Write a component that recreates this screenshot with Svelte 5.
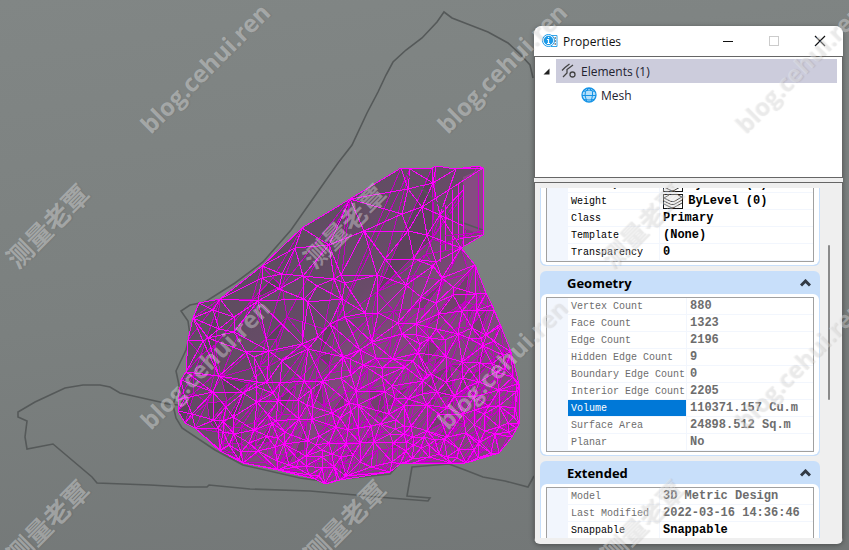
<script>
  const outline = [
    [401, 168], [410, 169], [432, 168], [436, 166], [456, 169], [478, 166], [483, 168], [483, 235],
    [461, 248], [475, 265], [486, 293], [492, 305], [500, 324], [511, 352], [519, 384], [519, 424],
    [512, 437], [499, 453], [466, 463], [400, 464], [390, 472], [340, 480], [325, 484], [315, 479],
    [278, 470], [243, 463], [220, 451], [195, 428], [185, 423], [178, 411], [178, 400], [181, 380],
    [186, 372], [188, 340], [193, 318], [199, 303], [220, 299], [262, 266], [302, 228], [350, 199]
  ];

  const hubs = [
    [295, 248], [262, 278], [258, 301], [213, 310], [234, 317], [279, 289], [303, 276], [304, 299],
    [342, 299], [329, 245], [334, 279], [408, 189], [364, 231], [408, 231], [422, 207], [433, 183],
    [427, 235], [436, 262], [385, 259], [406, 285], [378, 313], [421, 297], [453, 287], [462, 311],
    [439, 314], [345, 283], [402, 214], [440, 215], [208, 338], [246, 352], [269, 351], [302, 344],
    [282, 361], [343, 357], [257, 382], [280, 383], [213, 392], [243, 393], [257, 402], [218, 428],
    [276, 421], [254, 430], [285, 432], [307, 405], [322, 457], [436, 329], [350, 359], [382, 377],
    [427, 374], [385, 392], [427, 405], [486, 335], [478, 444], [444, 439], [454, 396]
  ];

  function seeded(seed) {
    let s = seed;
    return () => {
      s = (s * 16807) % 2147483647;
      return s / 2147483647;
    };
  }

  function inside(x, y) {
    let hit = false;
    for (let i = 0, j = outline.length - 1; i < outline.length; j = i++) {
      const [xi, yi] = outline[i];
      const [xj, yj] = outline[j];
      if (yi > y !== yj > y && x < ((xj - xi) * (y - yi)) / (yj - yi) + xi) hit = !hit;
    }
    return hit;
  }

  function scatter(count, seed, spacing) {
    const rnd = seeded(seed);
    const pts = [];
    for (let tries = 0; pts.length < count && tries < 20000; tries++) {
      const x = 180 + rnd() * 338;
      const y = 170 + rnd() * 312;
      const depth = (y - 170) / 312 + (x - 350) / 900;
      if (depth < 0.25 || rnd() > depth ** 3 * 1.4) continue;
      if (y < 258 && x > 436) continue;
      if (!inside(x, y)) continue;
      const gap = spacing * (1.9 - depth);
      if (pts.some((p) => Math.hypot(p[0] - x, p[1] - y) < gap)) continue;
      pts.push([Math.round(x), Math.round(y)]);
    }
    return pts;
  }

  // Bowyer-Watson triangulation; shear and squash stretch the triangles along one direction.
  function triangulate(points, shear, squash) {
    const rnd = seeded(91);
    const P = points.map(([x, y]) => [x + y * shear + rnd() * 0.01, y * squash + rnd() * 0.01]);
    const n = P.length;
    P.push([-9000, -9000], [9000, -9000], [0, 12000]);
    const make = (a, b, c) => {
      const [ax, ay] = P[a];
      const [bx, by] = P[b];
      const [cx, cy] = P[c];
      const d = 2 * (ax * (by - cy) + bx * (cy - ay) + cx * (ay - by));
      const a2 = ax * ax + ay * ay;
      const b2 = bx * bx + by * by;
      const c2 = cx * cx + cy * cy;
      const x = (a2 * (by - cy) + b2 * (cy - ay) + c2 * (ay - by)) / d;
      const y = (a2 * (cx - bx) + b2 * (ax - cx) + c2 * (bx - ax)) / d;
      return { v: [a, b, c], x, y, r: (ax - x) ** 2 + (ay - y) ** 2 };
    };
    let tris = [make(n, n + 1, n + 2)];
    for (let i = 0; i < n; i++) {
      const edges = new Map();
      const keep = [];
      for (const t of tris) {
        if ((P[i][0] - t.x) ** 2 + (P[i][1] - t.y) ** 2 < t.r) {
          for (const [a, b] of [[0, 1], [1, 2], [2, 0]]) {
            const u = Math.min(t.v[a], t.v[b]);
            const w = Math.max(t.v[a], t.v[b]);
            const key = u + '-' + w;
            if (edges.has(key)) edges.set(key, null);
            else edges.set(key, [u, w]);
          }
        } else keep.push(t);
      }
      for (const e of edges.values()) if (e) keep.push(make(e[0], e[1], i));
      tris = keep;
    }
    return tris
      .filter((t) => t.v.every((k) => k < n))
      .map((t) => t.v.map((k) => points[k]))
      .filter((t) => inside((t[0][0] + t[1][0] + t[2][0]) / 3, (t[0][1] + t[1][1] + t[2][1]) / 3));
  }

  const toPath = (tris) => tris.map((t) => 'M' + t.map((p) => p.join(' ')).join('L') + 'Z').join('');

  const front = triangulate([...outline, ...hubs, ...scatter(190, 77, 7)], 0, 1);
  const back = triangulate([...outline, ...scatter(300, 4242, 5)], 0.5, 0.55);
  const frontPath = toPath(front);
  const backPath = toPath(back);
  const shade = seeded(5);
  const facets = back.map((t) => ({ d: toPath([t]), o: shade() > 0.88 ? 0.2 : shade() * 0.06 }));
  const outlinePoints = outline.map((p) => p.join(',')).join(' ');

  const columns = [0, 1, 2];
  const rows = [0, 1];

  const general = [
    { label: 'Line Style', value: 'ByLevel (0)', swatch: true },
    { label: 'Weight', value: 'ByLevel (0)', swatch: true },
    { label: 'Class', value: 'Primary' },
    { label: 'Template', value: '(None)' },
    { label: 'Transparency', value: '0' }
  ];
  const geometry = [
    { label: 'Vertex Count', value: '880' },
    { label: 'Face Count', value: '1323' },
    { label: 'Edge Count', value: '2196' },
    { label: 'Hidden Edge Count', value: '9' },
    { label: 'Boundary Edge Count', value: '0' },
    { label: 'Interior Edge Count', value: '2205' },
    { label: 'Volume', value: '110371.157 Cu.m', selected: true },
    { label: 'Surface Area', value: '24898.512 Sq.m' },
    { label: 'Planar', value: 'No' }
  ].map((r) => ({ ...r, readonly: true }));
  const extended = [
    { label: 'Model', value: '3D Metric Design', readonly: true },
    { label: 'Last Modified', value: '2022-03-16 14:36:46', readonly: true },
    { label: 'Snappable', value: 'Snappable' }
  ];
  const groups = [
    { title: '', rows: general },
    { title: 'Geometry', rows: geometry, wide: true },
    { title: 'Extended', rows: extended }
  ];
</script>

<main>
  <svg class="scene" aria-hidden="true">
    <defs>
      <linearGradient id="skin" x1="0" y1="0" x2="0.75" y2="0.75">
        <stop offset="0.3" stop-color="#5e4f61" />
        <stop offset="0.62" stop-color="#6a4c6a" />
        <stop offset="0.78" stop-color="#824a7e" />
      </linearGradient>
      <clipPath id="body"><polygon points={outlinePoints} /></clipPath>
    </defs>
    <g class="contour">
      <path d="M533 78L530 65L520 54L508 43L488 32L470 25L452 18L444 12L437 22L422 38L406 50L393 62L386 75L378 92L367 113L352 145L338 163L291 230L263 262L235 283L205 302L190 305L181 311L188 321L190 335L186 350L176 371L179 385L173 405L176 418L182 428L215 450L243 465L300 478L322 481L390 474L400 463" />
      <path d="M178 405L168 404L160 402L120 393L110 387L100 385L83 385L65 388L35 402L18 412L18 417L27 421L25 437L27 449L53 444L92 477L97 483L150 485L185 487L207 487L209 485L250 489L310 491L390 498L428 501L430 498L407 496L412 467L449 464L465 470L483 477L505 481L528 487L534 476" />
    </g>
    <polygon points={outlinePoints} fill="url(#skin)" />
    <g clip-path="url(#body)">
      {#each facets as f}<path d={f.d} fill="#30202f" fill-opacity={f.o} />{/each}
      <path class="back" d={backPath} />
      <path class="front" d={frontPath} />
      <polygon points="463,177 483,168 483,235 463,228" fill="#864b82" />
      <path class="contour" d="M401 169L428 194L455 220L483 230" />
      <path class="front" d="M463 185V248M452 190V264M440 214V262M445 205V250M458 183V240M401 168L408 189M483 168L422 207M483 235L452 240" />
      <path class="back" d="M478 172V230M483 230L440 245M483 232L445 236" />
    </g>
    <polygon class="front" points={outlinePoints} />
  </svg>

  <aside class="window" aria-label="Properties">
    <header>
      <svg width="16" height="16" viewBox="0 0 16 16" aria-hidden="true">
        <path d="M9 2.5h6v11H9" fill="#fff" stroke="#35a5e8" />
        <path d="M12.500 5h1.500M12.500 8h1.500M12.500 11h1.500" stroke="#222" />
        <circle cx="6.5" cy="7.5" r="6" fill="#fff" stroke="#1b9ae8" />
        <circle cx="6.5" cy="7.5" r="4.7" fill="#1b9ae8" />
        <path d="M5 6.500h1.500v3.500M5 10.500h3M6 4.500h1.200" fill="none" stroke="#fff" stroke-width="1.2" />
      </svg>
      <h1>Properties</h1>
      <div class="controls">
        <button aria-label="Minimize"><svg width="12" height="12"><path d="M1 6.5h10" stroke="#111" /></svg></button>
        <button aria-label="Maximize" disabled><svg width="12" height="12"><rect x="1.5" y="1.5" width="9" height="9" fill="none" stroke="#ccc" /></svg></button>
        <button aria-label="Close"><svg width="12" height="12"><path d="M1 1l10 10M11 1L1 11" stroke="#111" stroke-width="1.2" /></svg></button>
      </div>
    </header>

    <ul class="tree" role="tree">
      <li role="treeitem" aria-expanded="true" aria-selected="true">
        <svg class="twisty" width="7" height="7" viewBox="0 0 7 7" aria-hidden="true"><path d="M6.5 0.5v6h-6z" fill="#222" /></svg>
        <span class="node selected">
          <svg width="16" height="16" viewBox="0 0 16 16" fill="none" stroke="#444" stroke-width="1.3" aria-hidden="true">
            <path d="M1 7.500l3-3l4.500-3.500M2 14l4-4v-3.500l6-4.500" />
            <circle cx="11.500" cy="11.500" r="2.500" />
          </svg>
          Elements (1)
        </span>
      </li>
      <li role="treeitem" aria-selected="false">
        <span class="node child">
          <svg width="16" height="16" viewBox="0 0 16 16" fill="none" aria-hidden="true">
            <circle cx="8" cy="8" r="7" fill="#b5e0fa" stroke="#1593e6" stroke-width="1.3" />
            <path d="M1 8.500h14M2.500 4.500L8 3l5.500 1.500M3 12.500l5 .5l5-.5M8 1L4.500 4.500L4 8.500L6 15M8 1l3.500 3.500v4L10 15" stroke="#1593e6" />
          </svg>
          Mesh
        </span>
      </li>
    </ul>

    <section class="body">
      <div class="scroller">
        {#each groups as g}
          <section class="group" class:partial={!g.title}>
            {#if g.title}
              <h2>
                <button aria-expanded="true">
                  {g.title}
                  <svg width="11" height="8" viewBox="0 0 11 8" fill="none" aria-hidden="true"><path d="M1 6.500l4.500-4.500l4.500 4.500" stroke="#333a44" stroke-width="3" /></svg>
                </button>
              </h2>
            {/if}
            <div class="sheet">
              <table class:wide={g.wide}>
                <tbody>
                  {#each g.rows as r}
                    <tr class:readonly={r.readonly} class:selected={r.selected}>
                      <th scope="row">{r.label}</th>
                      <td>
                        {#if r.swatch}
                          <svg class="swatch" width="20" height="15" viewBox="0 0 20 15" fill="none" stroke="#111" aria-hidden="true">
                            <rect x="0.5" y="0.500" width="19" height="14" fill="#fff" />
                            <path d="M1 4l7 3.500h3l8-4.500M1 7l7 3.500h3l8-4.500M1 10l7 3.500h3l8-4.500M1 4l5-3M19 3l-4-2" stroke-width="0.8" />
                          </svg>
                        {/if}
                        {r.value}
                      </td>
                    </tr>
                  {/each}
                </tbody>
              </table>
            </div>
          </section>
        {/each}
      </div>
      <div class="scrollbar"></div>
    </section>
  </aside>

  <svg class="watermark" aria-hidden="true">
    {#each rows as r}
      {#each columns as c}
        <g transform="translate({c * 297} {r * 296})">
          <text class="latin" transform="translate(151 135) rotate(-45)">blog.cehui.ren</text>
          <text class="han" transform="translate(18 270) rotate(-45)">测量老覃</text>
        </g>
      {/each}
    {/each}
  </svg>
</main>

<style>
  :global(body) {
    margin: 0;
  }
  main {
    position: relative;
    display: flex;
    justify-content: flex-end;
    box-sizing: border-box;
    height: 100vh;
    padding: 26px 6px 6px;
    overflow: hidden;
    background: linear-gradient(172deg, #818685, #7b807f 50%, #727676);
    font-family: "Open Sans", "Noto Sans", sans-serif;
  }
  .scene,
  .watermark {
    position: absolute;
    inset: 0;
    width: 100%;
    height: 100%;
    pointer-events: none;
  }
  .contour {
    fill: none;
    stroke: #555959;
    stroke-width: 1.6;
  }
  .back,
  .front {
    fill: none;
    stroke: #c400c6;
    stroke-width: 1;
    shape-rendering: crispEdges;
  }
  .front {
    stroke: #ff00ff;
  }
  .watermark text {
    fill: rgba(238, 238, 238, 0.38);
    text-shadow: 1px 1px 1px rgba(60, 60, 60, 0.3);
  }
  .latin {
    font: 700 24px "Open Sans", sans-serif;
  }
  .han {
    font: 700 26px "Noto Sans CJK SC", sans-serif;
  }
  .window {
    position: relative;
    display: flex;
    flex-direction: column;
    width: 309px;
    border-radius: 8px 8px 6px 6px;
    overflow: hidden;
    background: #efefef;
    box-shadow: 0 1px 5px rgba(0, 0, 0, 0.35);
  }
  header {
    display: flex;
    align-items: center;
    flex: none;
    height: 30px;
    padding-left: 8px;
    background: #fff;
  }
  h1 {
    margin: 0 0 0 5px;
    font-size: 12px;
    font-weight: 400;
    color: #111;
  }
  .controls {
    display: flex;
    margin-left: auto;
  }
  .controls button {
    display: grid;
    place-items: center;
    width: 46px;
    height: 30px;
    padding: 0;
    border: 0;
    background: none;
  }
  .tree {
    flex: none;
    box-sizing: border-box;
    height: 122px;
    margin: 0;
    padding: 2px 5px 0 8px;
    border: 1px solid #666;
    background: #fff;
    list-style: none;
    font-size: 12px;
    color: #222;
  }
  .tree li {
    display: flex;
    align-items: center;
    height: 24px;
  }
  .node {
    display: flex;
    align-items: center;
    gap: 4px;
    flex: 1;
    height: 24px;
    padding-left: 5px;
    color: #222230;
  }
  .twisty {
    margin-right: 6px;
  }
  .selected.node {
    background: #ccccdc;
  }
  .child {
    padding-left: 38px;
  }
  .body {
    display: flex;
    flex: 1;
    min-height: 0;
    margin-top: 4px;
    padding: 5px 0 6px 5px;
    border: 1px solid #666;
    border-bottom: 0;
  }
  .scroller {
    flex: 1;
    overflow: hidden;
    background: #efefef;
  }
  .group {
    margin-bottom: 5px;
    border-bottom: 1px solid #c8dffa;
    border-radius: 6px;
    background: #c8dffa;
    overflow: hidden;
  }
  .partial {
    margin-top: -16px;
  }
  h2 {
    margin: 0;
  }
  h2 button {
    display: flex;
    align-items: center;
    justify-content: space-between;
    width: 100%;
    height: 23px;
    padding: 0 9px 0 27px;
    border: 0;
    background: none;
    font: 700 13px "Open Sans", sans-serif;
    color: #000;
  }
  .sheet {
    margin: 0 1px;
    padding: 3px 5px;
    border-radius: 6px;
    background: #fff;
  }
  table {
    width: 100%;
    border: 1px solid #a0a0a0;
    border-spacing: 0;
    table-layout: fixed;
    background: #fff;
    font-family: "Liberation Mono", monospace;
    line-height: 15px;
    color: #000;
  }
  th,
  td {
    height: 15px;
    padding: 1px 0 0;
    border-bottom: 1px solid #f2f6fd;
    white-space: nowrap;
    text-align: left;
  }
  th {
    width: 88px;
    padding-left: 3px;
    border-left: 21px solid #f2f6fd;
    font-size: 10px;
    font-weight: 400;
  }
  .wide th {
    width: 115px;
  }
  td {
    padding-left: 3px;
    border-left: 1px solid #f2f6fd;
    font-size: 12px;
    font-weight: 700;
  }
  .swatch {
    display: inline-block;
    margin-right: -2px;
    vertical-align: top;
  }
  .readonly {
    color: #6d6d6d;
  }
  tr.selected th {
    background: #0078d7;
    background-clip: padding-box;
    color: #fff;
  }
  .scrollbar {
    flex: none;
    width: 2px;
    height: 155px;
    margin: 57px 12px 0 8px;
    border-radius: 1px;
    background: #8a8a8a;
  }
</style>
